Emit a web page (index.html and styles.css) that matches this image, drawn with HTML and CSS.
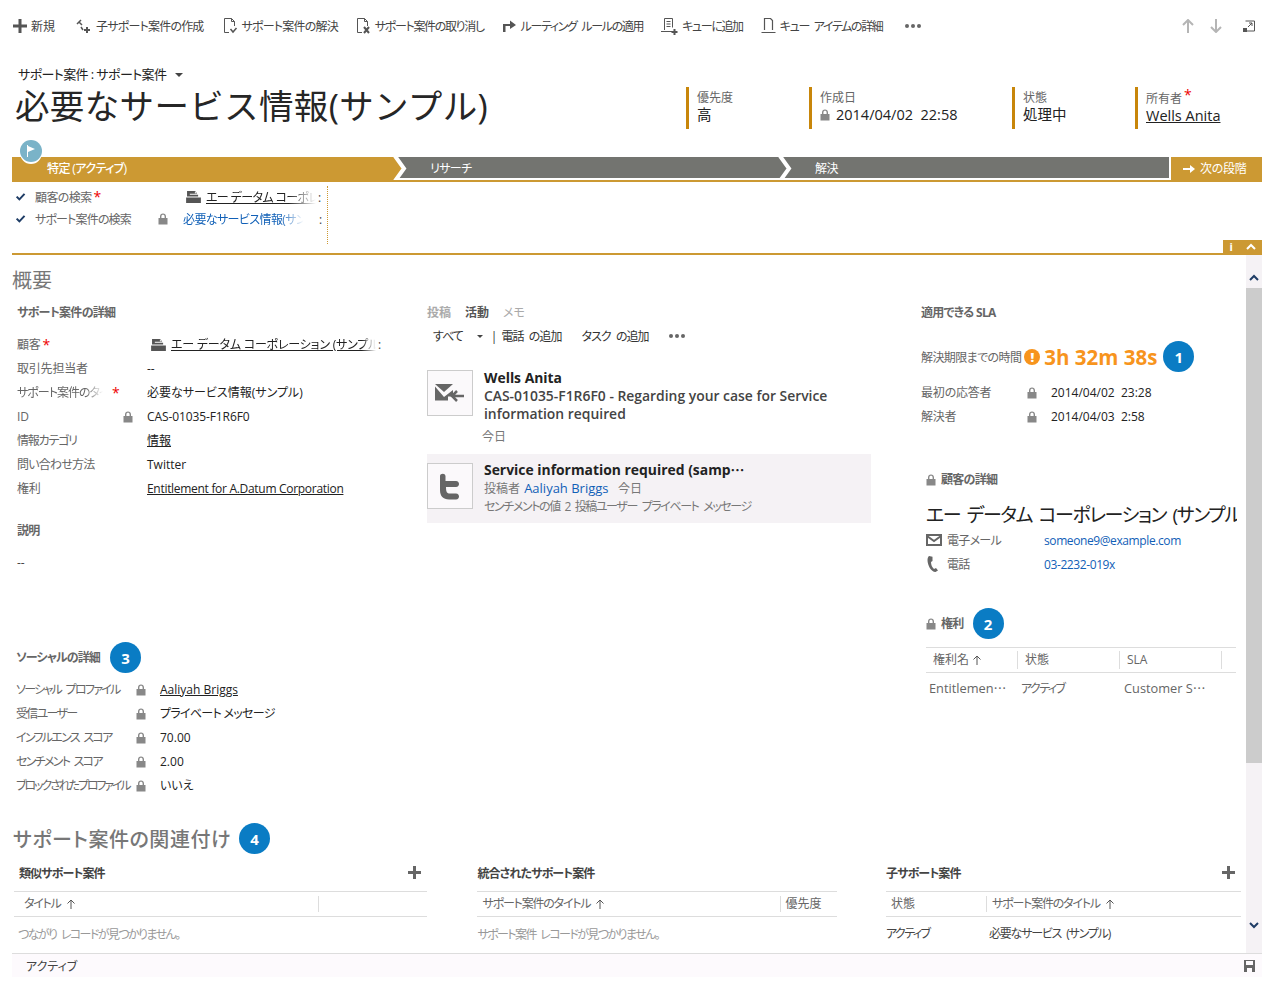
FILE: index.html
```html
<!DOCTYPE html>
<html lang="ja">
<head>
    <meta charset="UTF-8">
    <title>必要なサービス情報(サンプル)</title>
    <link rel="stylesheet" href="styles.css">
</head>
<body>
    <svg class="sprite" aria-hidden="true">
        <symbol id="lock" viewBox="0 0 10 12"><path d="M2 5V3.4C2 1.6 3.2.5 5 .5s3 1.1 3 2.9V5h1.5v6.5H.5V5zM3.4 5h3.2V3.5C6.6 2.4 6 1.8 5 1.8s-1.6.6-1.6 1.7z"/></symbol>
        <symbol id="check" viewBox="0 0 12 10"><path d="M1 5.4l1.6-1.6 2.2 2.2L9.6.8 11.2 2.4 4.8 9.2z"/></symbol>
        <symbol id="account" viewBox="0 0 16 13"><path d="M1 0h8l3 3H4v1h9v2H1zM0 7h16v6H0zM9.5 0v2.5H12z"/></symbol>
        <symbol id="up" viewBox="0 0 10 10"><path d="M5 1v9M1.5 4.5L5 1l3.5 3.5" fill="none" stroke="currentColor" stroke-width="1"/></symbol>
    </svg>

    <nav class="cmdbar">
        <a class="cmd cmd-new"><svg width="14" height="14" viewBox="0 0 14 14"><path d="M5.5 0h3v5.5H14v3H8.500V14h-3V8.500H0v-3h5.500z" fill="#555"/></svg><span class="kj">新規</span></a>
        <a class="cmd"><svg width="16" height="16" viewBox="0 0 16 16" fill="none" stroke="#555" stroke-width="1.500"><path d="M1 6l4-4M3 4l3 3M5 9l2 3"/><path d="M11 9v6M8 12h6" stroke-width="2"/></svg>子サポート案件の作成</a>
        <a class="cmd"><svg width="15" height="16" viewBox="0 0 15 16" fill="none" stroke="#555"><path d="M6 14.500H1.500v-14h7l3 3V8M8.500.500v3h3"/><path d="M7.500 11l2.500 3 3.500-4" stroke-width="1.500"/></svg>サポート案件の解決</a>
        <a class="cmd cmd-k"><svg width="15" height="16" viewBox="0 0 15 16" fill="none" stroke="#555"><path d="M6 14.500H1.500v-14h7l3 3V8M8.500.500v3h3"/><path d="M8 9l5 6M13 9l-5 6" stroke-width="2"/></svg>サポート案件の取り消し</a>
        <a class="cmd cmd-k"><svg width="15" height="14" viewBox="0 0 15 14"><path d="M1 13V5h7V1.500L14 6l-6 4V7H3.500v6z" fill="#555"/></svg>ルーティング ルールの適用</a>
        <a class="cmd cmd-k"><svg width="17" height="17" viewBox="0 0 17 17" fill="none" stroke="#555"><path d="M3.500 12V.5h8v9M0 13.500h11"/><path d="M5.500 3.500h4M5.500 6h4M5.500 8.500h4"/><path d="M13.500 11v6M10.500 14h6" stroke-width="2"/></svg>キューに追加</a>
        <a class="cmd cmd-k"><svg width="15" height="16" viewBox="0 0 15 16" fill="none" stroke="#555"><path d="M3.500 12V.5h6l2 2V12M.5 14.500h14" stroke-width="1.200"/></svg>キュー アイテムの詳細</a>
        <span class="dots cmd-more"><i></i><i></i><i></i></span>
        <div class="navtools">
            <svg width="12" height="14" viewBox="0 0 12 14"><path d="M6 1v13M1 6l5-5 5 5" fill="none" stroke="#b5b5b5" stroke-width="2"/></svg>
            <svg width="12" height="14" viewBox="0 0 12 14"><path d="M6 13V0M1 8l5 5 5-5" fill="none" stroke="#b5b5b5" stroke-width="2"/></svg>
            <svg class="pop" width="12" height="12" viewBox="0 0 12 12" fill="none" stroke="#555"><path d="M2.500 1h9v10h-8"/><path d="M0 8h4v4H0z" fill="#555" stroke="none"/><path d="M5 7l4-4M6 3h3v3"/></svg>
        </div>
    </nav>

    <header class="head">
        <div class="head-left">
            <div class="crumb">サポート案件 : サポート案件<span class="caret"></span></div>
            <h1>必要なサービス情報(サンプル)</h1>
        </div>
        <div class="head-fields">
            <div class="hfield hfield-s"><span>優先度</span><b>高</b></div>
            <div class="hfield hfield-l"><span>作成日</span><b><svg class="lock"><use href="#lock"/></svg>2014/04/02&nbsp; 22:58</b></div>
            <div class="hfield hfield-s"><span>状態</span><b>処理中</b></div>
            <div class="hfield"><span>所有者<em>*</em></span><b><u>Wells Anita</u></b></div>
        </div>
    </header>

    <section class="process">
        <div class="flag"><svg width="10" height="12" viewBox="0 0 10 12"><path d="M1 0h1v12H1zM2 1l7 3-7 3z" fill="#fff"/></svg></div>
        <div class="stages">
            <div class="stage stage-active">特定 (アクティブ)</div>
            <div class="stage">
                <svg class="chev" width="18" height="23" viewBox="0 0 18 23"><path d="M0 0h6l8 11.500-8 11.500H0z" fill="#cc9933"/><path d="M5 -1l9 12.500L5 24" fill="none" stroke="#fff" stroke-width="4"/></svg>
                リサーチ
            </div>
            <div class="stage stage-last">
                <svg class="chev" width="18" height="23" viewBox="0 0 18 23"><path d="M5 -1l9 12.500L5 24" fill="none" stroke="#fff" stroke-width="4"/></svg>
                解決
            </div>
            <div class="stage-next"><svg width="12" height="10" viewBox="0 0 12 10"><path d="M0 4h7V1l5 4-5 4V6H0z" fill="#fff"/></svg>次の段階</div>
        </div>
        <div class="pfields">
            <div class="prow">
                <svg class="tick"><use href="#check"/></svg><span class="plabel">顧客の検索<em>*</em></span>
                <svg class="acct"><use href="#account"/></svg><span class="pvalue"><u>エー データム コーポレーション</u></span><span class="more">:</span>
            </div>
            <div class="prow">
                <svg class="tick"><use href="#check"/></svg><span class="plabel plabel-lock">サポート案件の検索<svg class="lock"><use href="#lock"/></svg></span>
                <span class="pvalue pvalue-blue">必要なサービス情報(サンプル)</span><span class="more">:</span>
            </div>
        </div>
        <div class="ptabs"><span>i</span><svg width="10" height="7" viewBox="0 0 10 7"><path d="M1 6l4-4 4 4" fill="none" stroke="#fff" stroke-width="2"/></svg></div>
    </section>

    <div class="body">
        <main class="content">
            <h2 class="overview">概要</h2>
            <div class="cols">
                <div class="col-left">
                    <h3>サポート案件の詳細</h3>
                    <div class="rows">
                        <div class="row"><span class="k">顧客<em>*</em></span><span class="v"><svg class="acct"><use href="#account"/></svg><u class="clip">エー データム コーポレーション (サンプル)</u><span class="more">:</span></span></div>
                        <div class="row"><span class="k">取引先担当者</span><span class="v">--</span></div>
                        <div class="row"><span class="k"><span class="fade">サポート案件のタイトル</span><em class="star2">*</em></span><span class="v">必要なサービス情報(サンプル)</span></div>
                        <div class="row"><span class="k k-lock">ID<svg class="lock"><use href="#lock"/></svg></span><span class="v v-id">CAS-01035-F1R6F0</span></div>
                        <div class="row"><span class="k kana">情報カテゴリ</span><span class="v"><u>情報</u></span></div>
                        <div class="row"><span class="k kana-s">問い合わせ方法</span><span class="v">Twitter</span></div>
                        <div class="row"><span class="k">権利</span><span class="v v-latin"><u>Entitlement for A.Datum Corporation</u></span></div>
                    </div>
                    <h3 class="desc">説明</h3>
                    <div class="desc-val">--</div>
                    <h3 class="social">ソーシャルの詳細<span class="badge">3</span></h3>
                    <div class="rows rows-social">
                        <div class="row"><span class="k k-lock">ソーシャル プロファイル<svg class="lock"><use href="#lock"/></svg></span><span class="v"><u>Aaliyah Briggs</u></span></div>
                        <div class="row"><span class="k k-lock">受信ユーザー<svg class="lock"><use href="#lock"/></svg></span><span class="v v-kana">プライベート メッセージ</span></div>
                        <div class="row"><span class="k k-lock">インフルエンス スコア<svg class="lock"><use href="#lock"/></svg></span><span class="v">70.00</span></div>
                        <div class="row"><span class="k k-lock">センチメント スコア<svg class="lock"><use href="#lock"/></svg></span><span class="v">2.00</span></div>
                        <div class="row"><span class="k k-lock k-long">ブロックされたプロファイル<svg class="lock"><use href="#lock"/></svg></span><span class="v">いいえ</span></div>
                    </div>
                </div>

                <div class="col-mid">
                    <div class="tabs"><span>投稿</span><span class="on">活動</span><span class="memo">メモ</span></div>
                    <div class="acttools">
                        <span class="all">すべて</span><span class="caret"></span><span class="sep">|</span>
                        <span>電話 の追加</span><span>タスク の追加</span>
                        <span class="dots"><i></i><i></i><i></i></span>
                    </div>
                    <article class="act">
                        <div class="acticon"><svg width="30" height="22" viewBox="0 0 30 22"><path d="M0 2h18L9 10zM0 4.500v14h13v-4h5V8l-9 7z" fill="#666"/><path d="M29 14H18M22 9l-5 5 5 5" fill="none" stroke="#666" stroke-width="2.500"/></svg></div>
                        <div class="acttext">
                            <h4>Wells Anita</h4>
                            <p class="subject">CAS-01035-F1R6F0 - Regarding your case for Service information required</p>
                            <p class="when">今日</p>
                        </div>
                    </article>
                    <article class="act act-sel">
                        <div class="acticon"><svg width="20" height="27" viewBox="0 0 20 27"><path d="M0 3C0 .5 5-.5 5.500 3v5H16c4 0 4 6 0 6H6c0 5 1 6.500 4 6.500h6c4 0 4 6 0 6H9C3 26.500 0 23 0 17z" fill="#666"/></svg></div>
                        <div class="acttext">
                            <h4>Service information required (samp⋯</h4>
                            <p class="meta">投稿者 <a>Aaliyah Briggs</a>&nbsp;&nbsp; 今日</p>
                            <p class="meta2">センチメントの値 2 投稿ユーザー プライベート メッセージ</p>
                        </div>
                    </article>
                </div>

                <div class="col-right">
                    <h3>適用できる SLA</h3>
                    <div class="sla">
                        <span class="k">解決期限までの時間</span>
                        <span class="warn">!</span>
                        <span class="timer">3h 32m 38s</span>
                        <span class="badge">1</span>
                    </div>
                    <div class="rows rows-sla">
                        <div class="row"><span class="k k-lock">最初の応答者<svg class="lock"><use href="#lock"/></svg></span><span class="v">2014/04/02&nbsp; 23:28</span></div>
                        <div class="row"><span class="k k-lock">解決者<svg class="lock"><use href="#lock"/></svg></span><span class="v">2014/04/03&nbsp; 2:58</span></div>
                    </div>
                    <div class="sub">
                        <h3 class="locked"><svg class="lock"><use href="#lock"/></svg>顧客の詳細</h3>
                        <div class="company">エー データム コーポレーション (サンプル)</div>
                        <div class="contact"><svg width="16" height="12" viewBox="0 0 16 12" fill="none" stroke="#666" stroke-width="2"><path d="M1 1h14v10H1zM1 2l7 5 7-5"/></svg><span class="k">電子メール</span><a>someone9@example.com</a></div>
                        <div class="contact"><svg width="16" height="16" viewBox="0 0 16 16"><path d="M3 0l3.500.8V5L5 6c0 3 1 5 3 7l2-1 2 2.500L9.500 16C5 16 1.500 9 1.500 4 1.500 2 2 1 3 0z" fill="#666"/></svg><span class="k">電話</span><a>03-2232-019x</a></div>
                        <h3 class="locked ent"><svg class="lock"><use href="#lock"/></svg>権利<span class="badge">2</span></h3>
                        <div class="ent-table">
                            <div class="ent-head"><span>権利名 <svg class="up"><use href="#up"/></svg></span><span>状態</span><span>SLA</span></div>
                            <div class="ent-row"><span>Entitlemen⋯</span><span class="cell-kana">アクティブ</span><span>Customer S⋯</span></div>
                        </div>
                    </div>
                </div>
            </div>

            <h2 class="related">サポート案件の関連付け<span class="badge">4</span></h2>
            <div class="grids">
                <div class="subgrid sg-a">
                    <div class="sg-title">類似サポート案件<svg width="13" height="13" viewBox="0 0 13 13"><path d="M5 0h3v5h5v3H8v5H5V8H0V5h5z" fill="#666"/></svg></div>
                    <div class="sg-head"><span>タイトル <svg class="up"><use href="#up"/></svg></span><span></span></div>
                    <div class="sg-empty">つながり レコードが見つかりません。</div>
                </div>
                <div class="subgrid sg-b">
                    <div class="sg-title">統合されたサポート案件</div>
                    <div class="sg-head"><span>サポート案件のタイトル <svg class="up"><use href="#up"/></svg></span><span class="kj">優先度</span></div>
                    <div class="sg-empty">サポート案件 レコードが見つかりません。</div>
                </div>
                <div class="subgrid sg-c">
                    <div class="sg-title">子サポート案件<svg width="13" height="13" viewBox="0 0 13 13"><path d="M5 0h3v5h5v3H8v5H5V8H0V5h5z" fill="#666"/></svg></div>
                    <div class="sg-head"><span class="kj">状態</span><span>サポート案件のタイトル <svg class="up"><use href="#up"/></svg></span></div>
                    <div class="sg-data"><span class="cell-kana">アクティブ</span><span>必要なサービス (サンプル)</span></div>
                </div>
            </div>
        </main>
        <aside class="scroll">
            <svg width="10" height="7" viewBox="0 0 10 7"><path d="M1 6l4-4 4 4" fill="none" stroke="#1f3d66" stroke-width="2"/></svg>
            <div class="thumb"></div>
            <svg width="10" height="7" viewBox="0 0 10 7"><path d="M1 1l4 4 4-4" fill="none" stroke="#1f3d66" stroke-width="2"/></svg>
        </aside>
    </div>

    <footer class="status">
        <span>アクティブ</span>
        <svg width="11" height="12" viewBox="0 0 11 12"><path d="M0 0h11v12H0zM2 1v4h7V1zM3 8v4h5V8z" fill="#666" fill-rule="evenodd"/></svg>
    </footer>
</body>
</html>
```

FILE: styles.css
```css
* {
    box-sizing: border-box;
}

html, body {
    margin: 0;
    height: 981px;
    overflow: hidden;
    background: #fff;
}

body {
    font-family: "Open Sans", "Noto Sans CJK JP", sans-serif;
    font-feature-settings: "palt";
    font-size: 12px;
    color: #222;
}

.sprite {
    display: none;
}

h1, h2, h3, h4, p {
    margin: 0;
}

em {
    color: #e00;
    font-style: normal;
    font-size: 14px;
    line-height: 1;
    vertical-align: 3px;
    margin-left: 2px;
}

.lock {
    width: 10px;
    height: 12px;
    fill: #888;
}

.caret {
    display: inline-block;
    width: 0;
    height: 0;
    border: 4px solid transparent;
    border-top-color: #444;
    border-bottom-width: 0;
    vertical-align: 2px;
}

.dots {
    display: inline-flex;
    gap: 2px;
}

.dots i {
    width: 4px;
    height: 4px;
    border-radius: 50%;
    background: #666;
}

.badge {
    display: inline-flex;
    align-items: center;
    justify-content: center;
    flex: none;
    width: 31px;
    height: 31px;
    border-radius: 50%;
    background: #0a7cc4;
    color: #fff;
    font-size: 15px;
    font-weight: 700;
    letter-spacing: 0;
}

/* コマンドバー */
.cmdbar {
    height: 52px;
    display: flex;
    align-items: center;
    gap: 19px;
    padding: 0 13px;
}

.cmd {
    display: flex;
    align-items: center;
    gap: 4px;
    color: #444;
    letter-spacing: -.8px;
    white-space: pre;
}

.cmd .kj {
    letter-spacing: 0;
}

.cmd-new {
    margin-right: 2px;
}

.cmd-k {
    margin-left: -1px;
    letter-spacing: -1.35px;
    word-spacing: 3px;
}

.cmd-more {
    margin-left: 3px;
}

.navtools {
    margin-left: auto;
    display: flex;
    align-items: center;
    gap: 16px;
    padding-right: 1px;
}

.pop {
    margin-left: 5px;
}

/* ヘッダー */
.head {
    height: 105px;
    display: flex;
    padding-left: 15px;
}

.head-left {
    width: 671px;
}

.crumb {
    margin: 12px 0 0 3px;
    font-size: 13px;
    line-height: 20px;
    letter-spacing: -.6px;
}

.crumb .caret {
    margin-left: 9px;
}

h1 {
    font-size: 34.5px;
    font-weight: 400;
    font-feature-settings: normal;
    letter-spacing: .35px;
    line-height: 44px;
    color: #262626;
    white-space: nowrap;
}

.head-fields {
    display: flex;
    padding-top: 35px;
}

.hfield {
    width: 126px;
    height: 42px;
    border-left: 3px solid #c8860a;
    padding-left: 8px;
    display: flex;
    flex-direction: column;
}

.hfield-s {
    width: 123px;
}

.hfield-l {
    width: 203px;
}

.hfield span {
    font-size: 12px;
    line-height: 20px;
    margin-top: 1px;
    color: #666;
}

.hfield b {
    font-size: 14.5px;
    font-weight: 400;
    line-height: 14px;
    color: #222;
    display: flex;
    align-items: center;
    gap: 6px;
}

/* プロセスバー */
.process {
    position: relative;
    height: 98px;
    margin: 0 7px 0 12px;
    border-bottom: 2px solid #cc9933;
}

.flag {
    position: absolute;
    left: 8px;
    top: -17px;
    width: 22px;
    height: 22px;
    border-radius: 50%;
    background: #7ab3c8;
    box-shadow: 0 2px 0 #fff;
    display: flex;
    align-items: center;
    justify-content: center;
    z-index: 1;
}

.stages {
    height: 25px;
    display: flex;
    border-bottom: 2px solid #cc9933;
    color: #fff;
    line-height: 23px;
}

.stage {
    position: relative;
    width: 385px;
    height: 21px;
    background: #737470;
    padding-left: 40px;
    letter-spacing: -.6px;
}

.stage-last {
    width: 394px;
}

.stage-active {
    width: 378px;
    height: 23px;
    background: #cc9933;
    padding-left: 35px;
    font-weight: 500;
}

.chev {
    position: absolute;
    left: 0;
    top: 0;
}

.stage-next {
    margin-left: 2px;
    flex: 1;
    height: 23px;
    background: #cc9933;
    display: flex;
    align-items: center;
    gap: 5px;
    padding-left: 12px;
    letter-spacing: -.3px;
}

.pfields {
    width: 316px;
    height: 58px;
    margin-top: 8px;
    border-right: 1px dotted #cc9933;
    color: #666;
}

.prow {
    display: flex;
    align-items: center;
    height: 22px;
    white-space: nowrap;
    letter-spacing: -.6px;
}

.prow:first-child {
    margin-top: -4px;
}

.tick {
    width: 11px;
    height: 10px;
    fill: #1f3d66;
    margin: 0 9px 0 3px;
}

.plabel {
    width: 151px;
    display: flex;
    align-items: center;
}

.plabel-lock {
    width: 133px;
    margin-right: 15px;
    justify-content: space-between;
    letter-spacing: -.85px;
}

.acct {
    width: 15px;
    height: 12px;
    fill: #555;
    flex: none;
    margin-right: 5px;
}

.pvalue {
    width: 110px;
    overflow: hidden;
    color: #222;
    -webkit-mask-image: linear-gradient(90deg, #000 75%, transparent);
    mask-image: linear-gradient(90deg, #000 75%, transparent);
}

.pvalue-blue {
    width: 134px;
    color: #1160b7;
    -webkit-mask-image: linear-gradient(90deg, #000 72%, transparent 90%);
    mask-image: linear-gradient(90deg, #000 72%, transparent 90%);
}

.more {
    color: #444;
    margin-left: 2px;
}

.ptabs {
    position: absolute;
    right: 0;
    bottom: 0;
    width: 39px;
    height: 13px;
    background: #cc9933;
    color: #fff;
    display: flex;
    align-items: center;
    justify-content: space-around;
    font-size: 11px;
    font-weight: 700;
}

/* 本体 */
.body {
    height: 698px;
    margin: 0 7px 0 12px;
    display: flex;
}

.content {
    width: 1234px;
    overflow: hidden;
}

.scroll {
    width: 16px;
    background: #f5f2f5;
    display: flex;
    flex-direction: column;
    align-items: center;
    padding-top: 19px;
}

.thumb {
    width: 16px;
    height: 475px;
    margin: 7px 0 159px;
    background: #ccc;
}

.overview {
    font-size: 20px;
    font-weight: 400;
    line-height: 26px;
    margin-top: 13px;
    color: #777;
}

.cols {
    display: grid;
    grid-template-columns: 415px 494px 1fr;
    margin-top: 7px;
    height: 522px;
}

h3 {
    font-size: 12px;
    font-weight: 700;
    line-height: 24px;
    color: #666;
    letter-spacing: -.7px;
}

.col-left {
    padding-left: 5px;
}

.rows {
    margin-top: 8px;
}

.row {
    display: flex;
    height: 24px;
    line-height: 24px;
    white-space: nowrap;
}

.k {
    color: #666;
    letter-spacing: -.2px;
}

.kana {
    letter-spacing: -1.2px;
}

.kana-s {
    letter-spacing: -.8px;
}

.row .k {
    width: 130px;
    flex: none;
    display: flex;
    align-items: center;
    white-space: pre;
}

.k-lock {
    justify-content: space-between;
    padding-right: 14px;
}

.row .v {
    display: flex;
    align-items: center;
    color: #222;
}

.row .v-latin {
    letter-spacing: -.3px;
}

.row .v-id {
    letter-spacing: -.1px;
}

.row .v-kana {
    letter-spacing: -.7px;
    white-space: pre;
}

.v .acct {
    margin-left: 4px;
}

.clip {
    max-width: 205px;
    overflow: hidden;
    letter-spacing: -.2px;
    -webkit-mask-image: linear-gradient(90deg, #000 93%, transparent);
    mask-image: linear-gradient(90deg, #000 93%, transparent);
}

.fade {
    width: 86px;
    overflow: hidden;
    letter-spacing: -1px;
    -webkit-mask-image: linear-gradient(90deg, #000 80%, transparent);
    mask-image: linear-gradient(90deg, #000 80%, transparent);
}

.star2 {
    margin-left: 9px;
}

.desc {
    margin-top: 18px;
}

.desc-val {
    line-height: 24px;
    margin-top: 8px;
    color: #444;
}

.social {
    margin-top: 67px;
    display: flex;
    align-items: center;
    height: 31px;
    gap: 10px;
    margin-left: -1px;
    letter-spacing: -.9px;
}

.rows-social {
    margin-top: 5px;
}

.rows-social .row .k {
    width: 130px;
    margin-left: -1px;
    padding-right: 0;
    letter-spacing: -1.7px;
    word-spacing: 3px;
}

.rows-social .row .k-long {
    letter-spacing: -2.1px;
}

.rows-social .row .v {
    margin-left: 14px;
}

/* 活動 */
.tabs {
    display: flex;
    gap: 14px;
    line-height: 24px;
    font-weight: 700;
    color: #aaa;
}

.tabs .on {
    color: #555;
}

.tabs .memo {
    font-weight: 400;
}

.acttools {
    display: flex;
    align-items: center;
    height: 24px;
    margin-top: -1px;
    padding-left: 6px;
    gap: 20px;
    color: #333;
    letter-spacing: -.95px;
    word-spacing: 3px;
}

.acttools .all {
    margin-right: -6px;
    letter-spacing: -1px;
}

.acttools .caret {
    margin-right: -12px;
    border-width: 3px;
    border-bottom-width: 0;
}

.acttools .sep {
    margin-right: -15px;
}

.act {
    width: 444px;
    display: flex;
    gap: 11px;
    margin-top: 22px;
}

.act-sel {
    background: #f5f2f5;
    height: 69px;
    margin-top: 8px;
    padding-top: 8px;
}

.act-sel .acticon {
    margin-top: 1px;
}

.acticon {
    width: 46px;
    height: 46px;
    flex: none;
    border: 1px solid #ccc;
    background: #fbf9fb;
    display: flex;
    align-items: center;
    justify-content: center;
}

h4 {
    font-size: 13.9px;
    font-weight: 700;
    line-height: 18px;
    color: #222;
    margin-top: -1px;
    white-space: nowrap;
}

.subject {
    font-size: 13.9px;
    font-weight: 600;
    line-height: 18px;
    color: #444;
}

.when {
    margin: 5px 0 0 -2px;
    line-height: 18px;
    color: #777;
}

.meta, .meta2 {
    line-height: 18px;
    color: #777;
}

.meta a {
    color: #1160b7;
    font-size: 13px;
    margin-left: 1px;
}

.meta2 {
    letter-spacing: -1.4px;
    word-spacing: 3px;
}

/* 右カラム */
.sla {
    display: flex;
    align-items: center;
    height: 31px;
    margin-top: 16px;
}

.sla .k {
    letter-spacing: -.6px;
}

.warn {
    width: 16px;
    height: 16px;
    border-radius: 50%;
    background: #f7941d;
    color: #fff;
    font-weight: 800;
    font-size: 13px;
    line-height: 16px;
    text-align: center;
    margin: 0 4px 0 3px;
}

.timer {
    font-size: 20.5px;
    font-weight: 700;
    color: #f7941d;
    margin-right: 6px;
}

.rows-sla {
    margin-top: 9px;
}

.rows-sla .row .k {
    width: 116px;
    padding-right: 0;
}

.rows-sla .row .v {
    margin-left: 14px;
}

.sub {
    padding-left: 5px;
    width: 320px;
}

.locked {
    display: flex;
    align-items: center;
    gap: 5px;
    margin-top: 39px;
}

.company {
    font-size: 19px;
    line-height: 25px;
    margin-top: 11px;
    white-space: nowrap;
    overflow: hidden;
    width: 311px;
    color: #222;
    letter-spacing: -1.4px;
    word-spacing: 3px;
}

.contact {
    display: flex;
    align-items: center;
    height: 24px;
}

.contact svg {
    flex: none;
    margin-right: 5px;
}

.contact .k {
    width: 97px;
    letter-spacing: -.7px;
}

.contact a {
    color: #1160b7;
    letter-spacing: -.4px;
}

.ent {
    height: 31px;
    margin-top: 32px;
    gap: 5px;
}

.ent .badge {
    margin-left: 4px;
}

.ent-table {
    width: 310px;
    margin-top: 8px;
}

.ent-head {
    display: grid;
    grid-template-columns: 92px 102px 102px;
    height: 26px;
    border-top: 1px solid #ddd;
    border-bottom: 1px solid #ddd;
    color: #666;
    align-items: center;
}

.ent-head span {
    padding-left: 7px;
    border-right: 1px solid #ddd;
    height: 18px;
    line-height: 17px;
}

.up {
    width: 10px;
    height: 10px;
    vertical-align: -1px;
    color: #555;
}

.ent-row {
    display: grid;
    grid-template-columns: 92px 103px 102px;
    align-items: center;
    height: 29px;
    font-size: 12.8px;
    color: #666;
    padding-left: 3px;
}

.cell-kana {
    font-size: 12px;
    letter-spacing: -1.6px;
}

/* 関連付け */
.related {
    display: flex;
    align-items: center;
    gap: 8px;
    height: 31px;
    padding-left: 1px;
    font-size: 20px;
    font-weight: 500;
    letter-spacing: .55px;
    color: #777;
}

.grids {
    display: grid;
    grid-template-columns: 413px 360px 355px;
    justify-content: space-between;
    margin: 7px 0 0 2px;
    padding-right: 5px;
}

.sg-title {
    display: flex;
    justify-content: space-between;
    align-items: center;
    height: 23px;
    padding: 0 6px 0 5px;
    font-weight: 700;
    color: #444;
    letter-spacing: -.9px;
}

.sg-b .sg-title {
    padding-left: 1px;
}

.sg-c .sg-title {
    padding-left: 0;
}

.sg-head {
    display: grid;
    height: 26px;
    margin-top: 7px;
    border-top: 1px solid #ddd;
    border-bottom: 1px solid #ddd;
    align-items: center;
    color: #666;
    letter-spacing: -1.2px;
    word-spacing: 3px;
}

.sg-a .sg-head {
    grid-template-columns: 305px 1fr;
}

.sg-b .sg-head {
    grid-template-columns: 304px 1fr;
}

.sg-c .sg-head {
    grid-template-columns: 101px 1fr;
}

.sg-head span {
    height: 16px;
    line-height: 16px;
    padding-left: 5px;
}

.sg-a .sg-head span:first-child {
    padding-left: 10px;
}

.sg-b .sg-head span:first-child {
    padding-left: 6px;
}

.sg-head .kj {
    letter-spacing: 0;
}

.sg-head span:first-child {
    border-right: 1px solid #ddd;
}

.sg-empty {
    line-height: 36px;
    color: #999;
    padding-left: 4px;
    letter-spacing: -1.6px;
    word-spacing: 3px;
}

.sg-b .sg-empty {
    padding-left: 1px;
}

.sg-data {
    display: grid;
    grid-template-columns: 103px 1fr;
    line-height: 34px;
    color: #444;
    letter-spacing: -1.2px;
    word-spacing: 3px;
}

/* ステータス */
.status {
    height: 24px;
    margin: 0 7px 0 12px;
    border-top: 1px solid #ddd;
    background: #fdfafd;
    display: flex;
    align-items: center;
    justify-content: space-between;
    padding: 0 7px 0 14px;
    color: #444;
}
```
